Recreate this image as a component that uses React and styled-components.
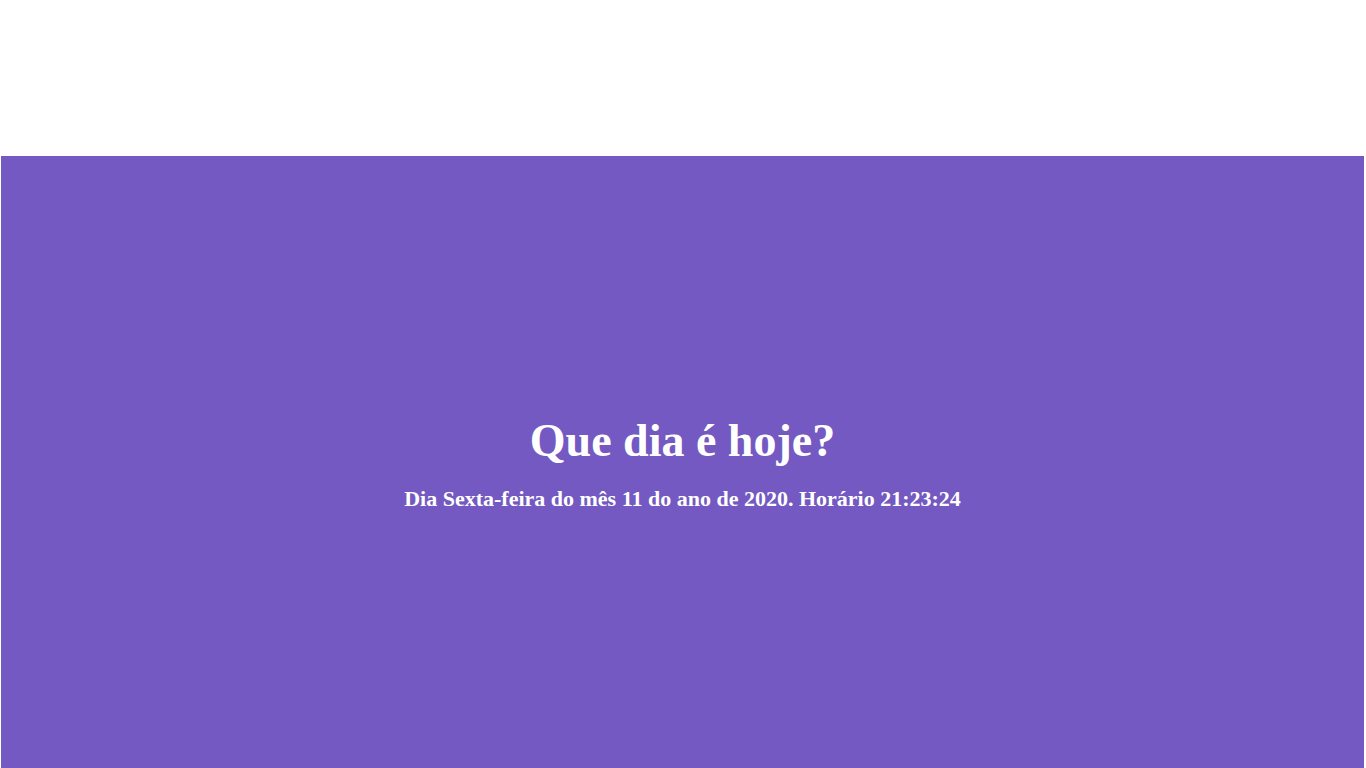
import React from "react";
import styled, { createGlobalStyle } from "styled-components";

const GlobalStyle = createGlobalStyle`
  html, body {
    margin: 0;
    padding: 0;
    background: #fff;
    overflow: hidden;
  }
`;

const Page = styled.div`
  padding: 156px 2px 0 1px;
`;

const Banner = styled.section`
  display: flex;
  flex-direction: column;
  align-items: center;
  height: 612px;
  padding-top: 258px;
  box-sizing: border-box;
  background: #7359c1;
  color: #fff;
  font-family: "Liberation Serif", "Times New Roman", serif;
`;

const Title = styled.h1`
  margin: 0;
  font-size: 46px;
  font-weight: 700;
`;

const Subtitle = styled.h2`
  margin: 19px 0 0;
  font-size: 22px;
  font-weight: 700;
`;

export default function App() {
  return (
    <>
      <GlobalStyle />
      <Page>
        <Banner>
          <Title>Que dia é hoje?</Title>
          <Subtitle>
            Dia Sexta-feira do mês 11 do ano de 2020. Horário 21:23:24
          </Subtitle>
        </Banner>
      </Page>
    </>
  );
}
